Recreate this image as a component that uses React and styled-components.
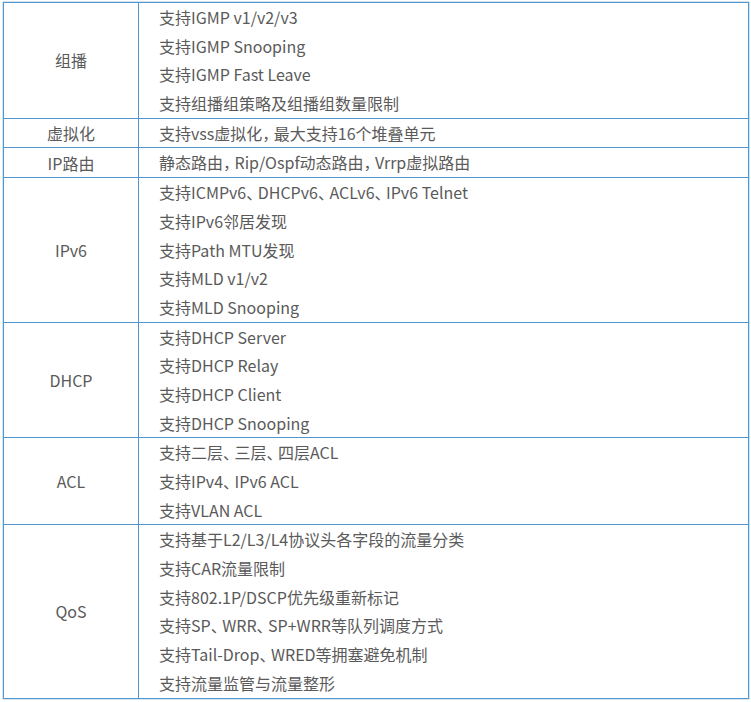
import React from 'react'
import { styled, createGlobalStyle } from 'styled-components'

const GlobalStyle = createGlobalStyle`
  body {
    margin: 0;
    background: #ffffff;
    font-family: "Noto Sans CJK SC", "Noto Sans", sans-serif;
  }
`

const rows = [
  { label: '组播', items: ['支持IGMP v1/v2/v3', '支持IGMP Snooping', '支持IGMP Fast Leave', '支持组播组策略及组播组数量限制'] },
  { label: '虚拟化', items: ['支持vss虚拟化，最大支持16个堆叠单元'] },
  { label: 'IP路由', items: ['静态路由，Rip/Ospf动态路由，Vrrp虚拟路由'] },
  { label: 'IPv6', items: ['支持ICMPv6、DHCPv6、ACLv6、IPv6 Telnet', '支持IPv6邻居发现', '支持Path MTU发现', '支持MLD v1/v2', '支持MLD Snooping'] },
  { label: 'DHCP', items: ['支持DHCP Server', '支持DHCP Relay', '支持DHCP Client', '支持DHCP Snooping'] },
  { label: 'ACL', items: ['支持二层、三层、四层ACL', '支持IPv4、IPv6 ACL', '支持VLAN ACL'] },
  { label: 'QoS', items: ['支持基于L2/L3/L4协议头各字段的流量分类', '支持CAR流量限制', '支持802.1P/DSCP优先级重新标记', '支持SP、WRR、SP+WRR等队列调度方式', '支持Tail-Drop、WRED等拥塞避免机制', '支持流量监管与流量整形'] },
]

// the source font sets 、 and ， narrower than a full em
const renderText = (text) =>
  text.split(/([、，])/).map((part, i) =>
    part === '、' || part === '，' ? <Punct key={i}>{part}</Punct> : part
  )

const App = () => {
  return (
    <Page>
      <GlobalStyle />
      <Table>
        {rows.map((r) => (
          <Row key={r.label}>
            <Label>{r.label}</Label>
            <Items>
              {r.items.map((t) => (
                <Line key={t}>{renderText(t)}</Line>
              ))}
            </Items>
          </Row>
        ))}
      </Table>
    </Page>
  )
}

export default App

const Page = styled.div`
  padding: 2px 4px 4px 3px;
`

const Table = styled.div`
  width: 744px;
  border: 1px solid #5296d0;
  box-shadow: 0 0 0 0.5px #a9cbe9;
  color: #5a5a5a;
  font-size: 16px;
`

const Row = styled.div`
  display: grid;
  grid-template-columns: 135px 1fr;
  & + & {
    border-top: 1px solid #5296d0;
  }
`

const Label = styled.div`
  display: flex;
  align-items: center;
  justify-content: center;
  border-right: 1px solid #5296d0;
`

const Items = styled.div`
  padding-left: 20px;
  display: flex;
  flex-direction: column;
`

const Line = styled.div`
  height: 28.7px;
  line-height: 28.7px;
  white-space: nowrap;
`

const Punct = styled.span`
  letter-spacing: -4.5px;
`
